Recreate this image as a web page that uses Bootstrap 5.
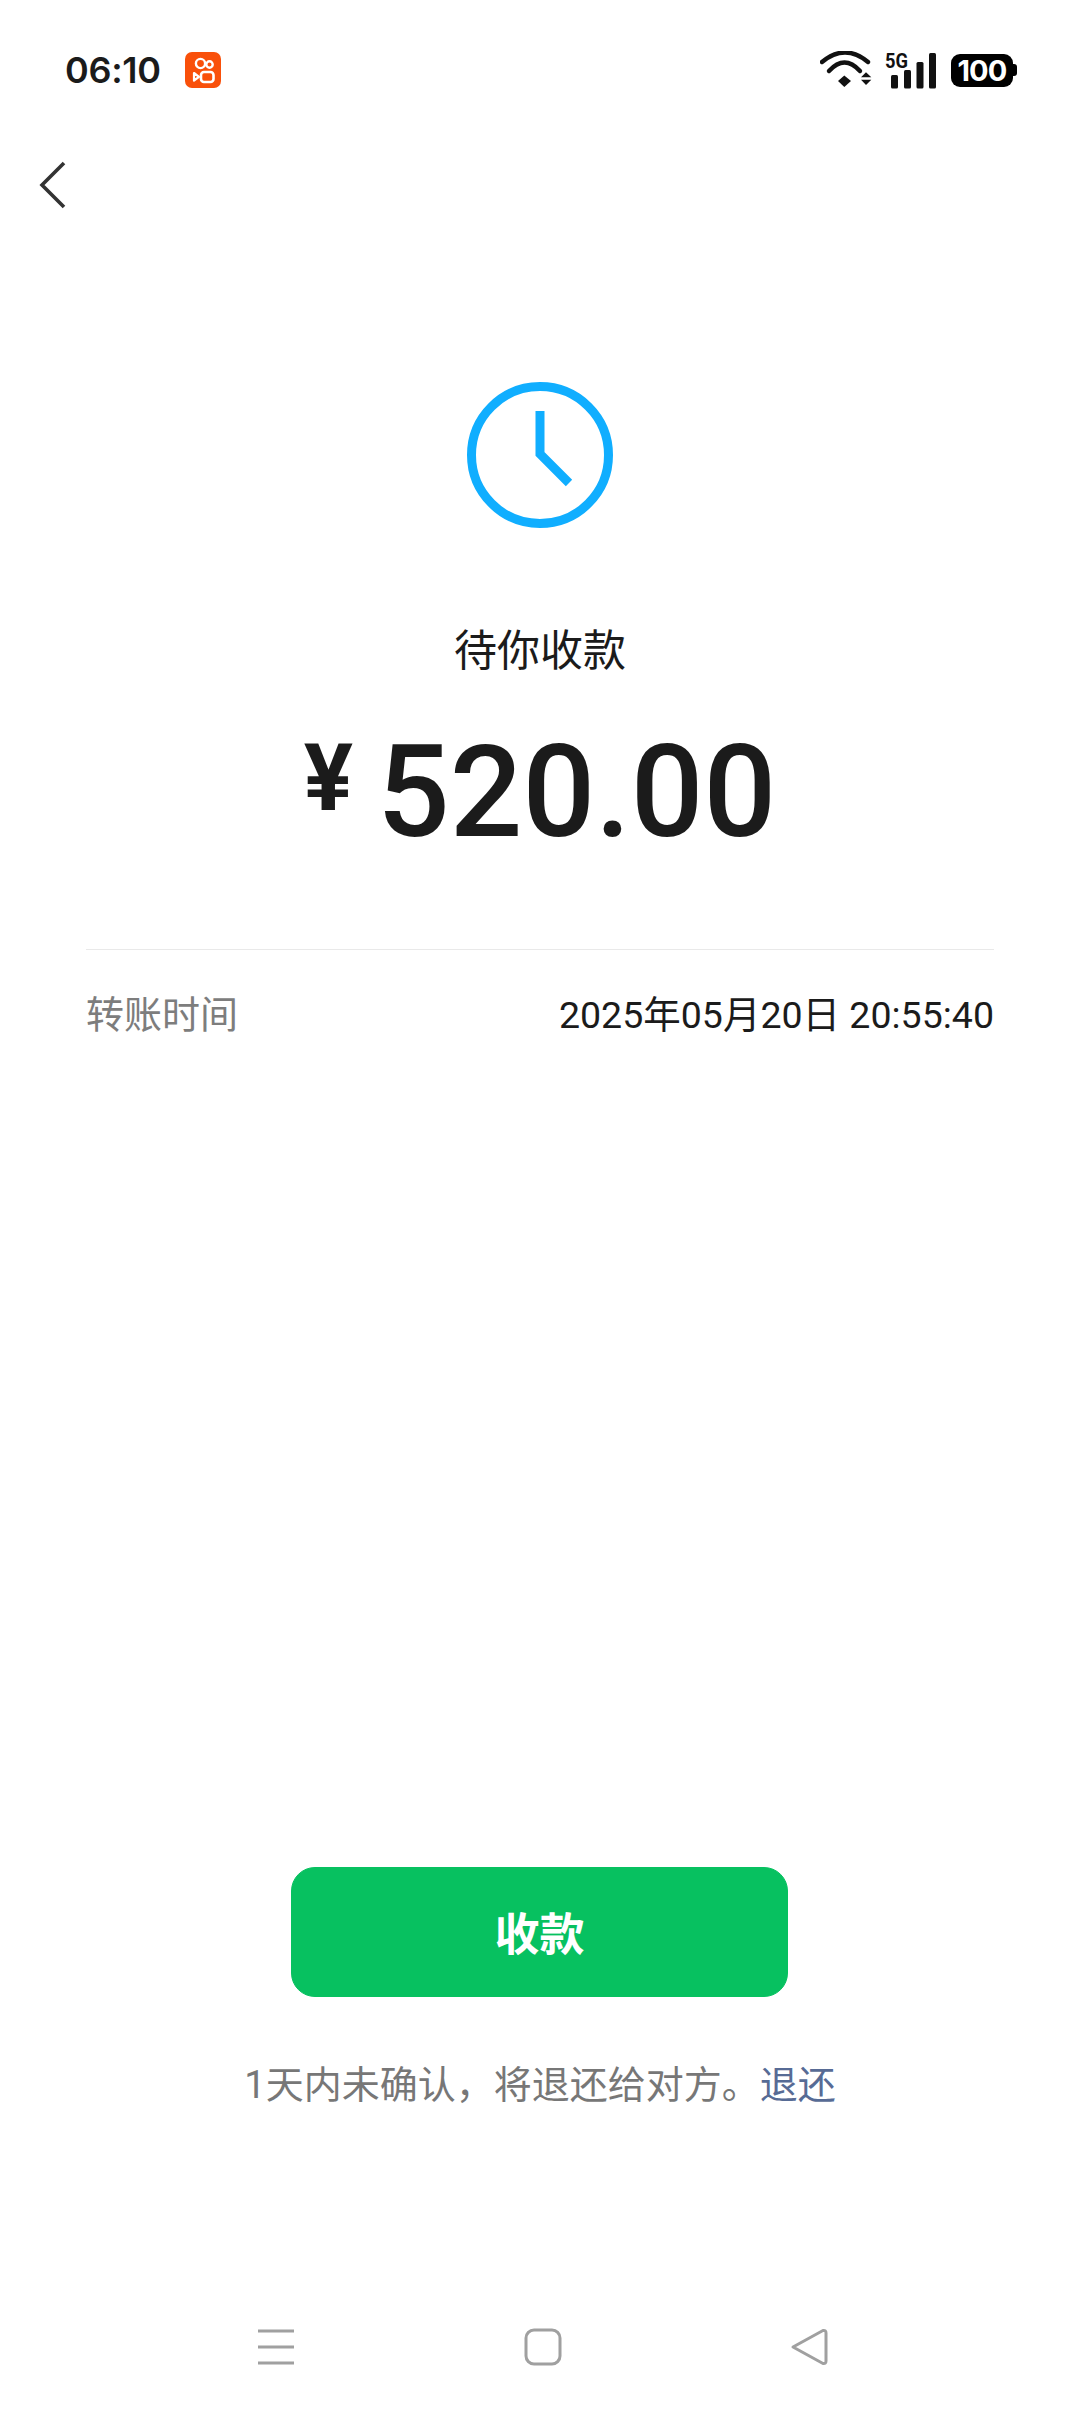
<!DOCTYPE html>
<html lang="zh-CN">
<head>
<meta charset="utf-8" />
<meta name="viewport" content="width=device-width,initial-scale=1" />
<title>待你收款</title>
<link href="https://cdn.jsdelivr.net/npm/bootstrap@5.3.3/dist/css/bootstrap.min.css" rel="stylesheet" />
<style>
  body { background:#fff; font-family:Roboto,"Noto Sans CJK SC",sans-serif; color:#1b1b1b; }
  .pay-page { height:2412px; }

  .status-row { height:140px; padding:0 63px 0 65px; }
  .status-time { font:600 36px/1 Inter,sans-serif; letter-spacing:-.3px; }
  .app-logo { margin-left:24px; }
  .wifi-gap { margin-right:13px; }
  .signal-gap { margin-right:14px; }
  .batt-box { width:62px; height:33px; border-radius:9px; background:#000; color:#fff; font:700 29px/33px Inter,sans-serif; letter-spacing:-.8px; }
  .batt-nub { width:4px; height:12px; background:#000; border-radius:0 3px 3px 0; }

  .back-row { height:90px; padding-left:39px; }

  .clock-wrap { margin-top:152px; }
  .pay-title { margin-top:93px; font-size:43px; line-height:60px; }
  .pay-amount { margin-top:41px; height:140px; }
  .yen-sign { font:700 92px/1 Roboto,sans-serif; margin-right:24px; margin-top:-26px; }
  .amount-num { font:500 128px/140px Roboto,sans-serif; }

  .pay-line { margin:87px 86px 0 86px; border-top:1px solid #e9e9e9; }
  .time-row { margin:40px 86px 0 86px; line-height:50px; }
  .time-label { font-size:38px; color:#7d7d7d; }
  .time-value { font-size:37.5px; color:#1b1b1b; }

  .btn-receive { width:497px; height:130px; margin-right:1px; padding-top:14px; padding-bottom:6px; border-radius:24px; background:#07c160; border-color:#07c160; color:#fff; font-size:45px; font-weight:700; }
  .btn-receive:hover { background:#07c160; border-color:#07c160; color:#fff; }
  .refund-note { margin-top:63px; font-size:38px; line-height:50px; color:#777; }
  .refund-link { color:#576b95; text-decoration:none; }

  .sys-nav { margin-top:218px; padding:0 252px 46px 257px; }
</style>
</head>
<body>

<div class="pay-page d-flex flex-column">

  <!-- status bar -->
  <div class="status-row d-flex align-items-center">
    <span class="status-time">06:10</span>
    <svg class="app-logo" width="36" height="36" viewBox="0 0 36 36">
      <rect width="36" height="36" rx="7" fill="#f9500a"/>
      <circle cx="15.5" cy="11.5" r="4.6" fill="none" stroke="#fff" stroke-width="2.4"/>
      <circle cx="24.5" cy="12.5" r="3.2" fill="none" stroke="#fff" stroke-width="2.4"/>
      <rect x="16" y="20" width="12.5" height="10" rx="3" fill="none" stroke="#fff" stroke-width="2.6"/>
      <path d="M9 21 L14 24.8 L9 28.5 Z" fill="none" stroke="#fff" stroke-width="2.2" stroke-linejoin="round"/>
    </svg>
    <div class="d-flex align-items-center ms-auto">
      <svg class="wifi-gap" width="52" height="38" viewBox="0 0 52 38">
        <path d="M2 11 Q25 -8 48 11" fill="none" stroke="#111" stroke-width="4.4" stroke-linecap="round"/>
        <path d="M9 20 Q24.5 3 40 20" fill="none" stroke="#111" stroke-width="4.4" stroke-linecap="round"/>
        <path d="M24.3 24.5 L31 30 L24.3 36 L18 30 Z" fill="#111"/>
        <path d="M41 26.3 L46 21.3 L51.3 26.3 Z M41 28.7 L51.3 28.7 L46 34 Z" fill="#111"/>
      </svg>
      <svg class="signal-gap" width="52" height="50" viewBox="0 -6 52 50">
        <text x="0" y="17" font-family="Roboto,sans-serif" font-weight="700" font-size="21" textLength="23" lengthAdjust="spacingAndGlyphs" fill="#111">5G</text>
        <rect x="6" y="24" width="7" height="13.5" rx="1.5" fill="#111"/>
        <rect x="19" y="19" width="7" height="18.5" rx="1.5" fill="#111"/>
        <rect x="31.5" y="11" width="7" height="26.5" rx="1.5" fill="#111"/>
        <rect x="44" y="2" width="7" height="35.5" rx="1.5" fill="#111"/>
      </svg>
      <div class="batt-box text-center">100</div>
      <div class="batt-nub"></div>
    </div>
  </div>

  <!-- back -->
  <div class="back-row d-flex align-items-center">
    <svg width="28" height="48" viewBox="0 0 28 48">
      <polyline points="25,2 3,24 25,46" fill="none" stroke="#333" stroke-width="3.6"/>
    </svg>
  </div>

  <!-- receipt -->
  <div class="clock-wrap text-center">
    <svg class="d-block mx-auto" width="146" height="146" viewBox="0 0 146 146">
      <circle cx="73" cy="73" r="68.5" fill="none" stroke="#10aeff" stroke-width="9"/>
      <polyline points="73,29 73,72 102,101" fill="none" stroke="#10aeff" stroke-width="9"/>
    </svg>
  </div>
  <div class="pay-title text-center">待你收款</div>
  <div class="pay-amount d-flex justify-content-center align-items-center">
    <span class="yen-sign">¥</span>
    <span class="amount-num">520.00</span>
  </div>

  <div class="pay-line"></div>
  <div class="time-row d-flex justify-content-between">
    <span class="time-label">转账时间</span>
    <span class="time-value">2025年05月20日 20:55:40</span>
  </div>

  <!-- bottom -->
  <div class="mt-auto text-center">
    <button type="button" class="btn btn-receive">收款</button>
    <div class="refund-note">1天内未确认，将退还给对方。<a href="#" class="refund-link">退还</a></div>
    <div class="sys-nav d-flex justify-content-between align-items-center">
      <svg width="38" height="38" viewBox="0 0 38 38">
        <path d="M1 3 H37 M1 19 H37 M1 35 H37" stroke="#a0a0a0" stroke-width="3"/>
      </svg>
      <svg width="38" height="38" viewBox="0 0 38 38">
        <rect x="2" y="2" width="34" height="34" rx="8" fill="none" stroke="#a0a0a0" stroke-width="3"/>
      </svg>
      <svg width="38" height="38" viewBox="0 0 38 38">
        <path d="M3 19 L33 2.5 Q36 2 36 5 V33 Q36 36 33 35.5 Z" fill="none" stroke="#a0a0a0" stroke-width="3" stroke-linejoin="round"/>
      </svg>
    </div>
  </div>

</div>

<script src="https://cdn.jsdelivr.net/npm/bootstrap@5.3.3/dist/js/bootstrap.bundle.min.js"></script>
</body>
</html>
